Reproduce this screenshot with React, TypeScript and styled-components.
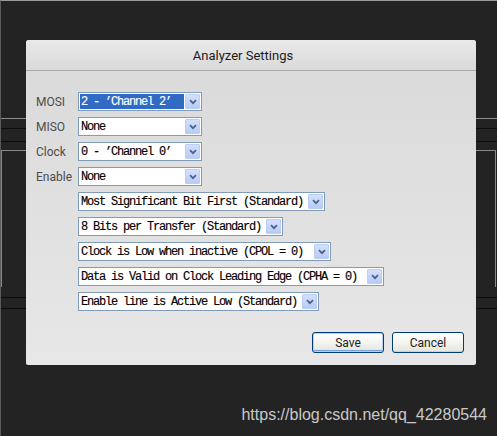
import React from "react";
import styled, { createGlobalStyle } from "styled-components";

const Global = createGlobalStyle`
  html, body { margin: 0; padding: 0; background: #232323; }
  #root { width: 497px; height: 436px; }
`;

const Screen = styled.div`
  position: relative;
  width: 497px;
  height: 436px;
  overflow: hidden;
  box-sizing: border-box;
  background: #232323;
  border-top: 1px solid #9a9a9a;
  border-left: 1px solid #5a5a5a;
  display: flex;
  flex-direction: column;
`;

const Line = styled.div<{ $mt: number; $color: string }>`
  margin-top: ${(p) => p.$mt}px;
  height: 1px;
  flex: none;
  background: ${(p) => p.$color};
`;

const Frame = styled.div`
  margin-top: 8px;
  margin-right: 1px;
  height: 137px;
  flex: none;
  box-sizing: border-box;
  border: 1px solid #8a8a8a;
  border-bottom: none;
`;

const Dialog = styled.div`
  position: absolute;
  left: 25px;
  top: 39px;
  width: 450px;
  height: 325px;
  border-radius: 3px 3px 2px 2px;
  overflow: hidden;
  display: flex;
  flex-direction: column;
  background: linear-gradient(#d9d9d9, #e7e7e7);
`;

const TitleBar = styled.div`
  height: 30px;
  flex: none;
  border-bottom: 1px solid #a9a9a9;
  background: linear-gradient(#e9e9e9, #dadada);
  display: flex;
  align-items: center;
  justify-content: center;
  padding-right: 16px;
  font: 13px Roboto, "Liberation Sans", sans-serif;
  color: #1c1c1c;
`;

const Body = styled.div`
  flex: 1;
  display: flex;
  flex-direction: column;
  padding: 21px 12px 12px 10px;
`;

const Rows = styled.div`
  display: flex;
  flex-direction: column;
  gap: 6px;
`;

const Row = styled.div`
  display: flex;
  align-items: center;
  height: 19px;
`;

const Label = styled.div`
  width: 42px;
  flex: none;
  font: 12px Roboto, "Liberation Sans", sans-serif;
  color: #4c4c4c;
`;

const SelectBox = styled.div<{ $w: number }>`
  width: ${(p) => p.$w}px;
  height: 19px;
  box-sizing: border-box;
  border: 1px solid #7f9db9;
  background: #fff;
  display: flex;
  align-items: stretch;
  padding: 1px;
  gap: 1px;
`;

const Value = styled.div<{ $sel?: boolean }>`
  flex: 1;
  display: flex;
  align-items: center;
  padding-left: 1px;
  background: ${(p) => (p.$sel ? "#316ac5" : "transparent")};
  color: ${(p) => (p.$sel ? "#fff" : "#000")};
  font: 12px "Liberation Mono", monospace;
  letter-spacing: -1.2px;
  -webkit-text-stroke: 0.15px ${(p) => (p.$sel ? "#fff" : "#000")};
  white-space: pre;
  overflow: hidden;
`;

const Arrow = styled.div`
  width: 15px;
  flex: none;
  box-sizing: border-box;
  border: 1px solid #bccdf5;
  border-radius: 1px;
  background: linear-gradient(#d4e0fd, #b7cbf7);
  display: flex;
  align-items: center;
  justify-content: center;
`;

const Footer = styled.div`
  margin-top: auto;
  display: flex;
  justify-content: flex-end;
  gap: 8px;
`;

const Btn = styled.button<{ $default?: boolean }>`
  width: 72px;
  height: 21px;
  padding: 0;
  border: 1px solid #003c74;
  border-radius: 3px;
  background: linear-gradient(#ffffff, #f3f3ee 55%, #e4e3dc);
  box-shadow: ${(p) =>
    p.$default
      ? "inset 0 0 0 1px #b9d1f7, inset 0 -1px 0 1px #7aa0e6"
      : "inset 0 -1px 0 #d6d0c5"};
  font: 12px Roboto, "Liberation Sans", sans-serif;
  color: #222;
`;

const Watermark = styled.div`
  position: absolute;
  right: 10px;
  bottom: 12px;
  font: 16px/18px "Liberation Sans", Arial, sans-serif;
  color: #c9c9c9;
`;

const Chevron = () => (
  <svg width="8" height="6" viewBox="0 0 8 6">
    <path d="M1 1.2 L4 4.2 L7 1.2" fill="none" stroke="#4d6185" strokeWidth="1.7" />
  </svg>
);

const Select = ({ w, value, sel }: { w: number; value: string; sel?: boolean }) => (
  <SelectBox $w={w}>
    <Value $sel={sel}>{value}</Value>
    <Arrow>
      <Chevron />
    </Arrow>
  </SelectBox>
);

const channels: { label: string; value: string; sel?: boolean }[] = [
  { label: "MOSI", value: "2 - \u2019Channel 2\u2019", sel: true },
  { label: "MISO", value: "None" },
  { label: "Clock", value: "0 - \u2019Channel 0\u2019" },
  { label: "Enable", value: "None" },
];

const options: { value: string; w: number }[] = [
  { value: "Most Significant Bit First (Standard)", w: 247 },
  { value: "8 Bits per Transfer (Standard)", w: 205 },
  { value: "Clock is Low when inactive (CPOL = 0)", w: 253 },
  { value: "Data is Valid on Clock Leading Edge (CPHA = 0)", w: 306 },
  { value: "Enable line is Active Low (Standard)", w: 241 },
];

export default function App() {
  return (
    <>
      <Global />
      <Screen>
        <Line $mt={117} $color="#8c8c8c" />
        <Line $mt={9} $color="#0c0c0c" />
        <Line $mt={12} $color="#0c0c0c" />
        <Frame />
        <Line $mt={10} $color="#0c0c0c" />
        <Line $mt={10} $color="#0c0c0c" />
        <Dialog>
          <TitleBar>Analyzer Settings</TitleBar>
          <Body>
            <Rows>
              {channels.map((c) => (
                <Row key={c.label}>
                  <Label>{c.label}</Label>
                  <Select w={124} value={c.value} sel={c.sel} />
                </Row>
              ))}
              {options.map((o) => (
                <Row key={o.value}>
                  <Label />
                  <Select w={o.w} value={o.value} />
                </Row>
              ))}
            </Rows>
            <Footer>
              <Btn $default>Save</Btn>
              <Btn>Cancel</Btn>
            </Footer>
          </Body>
        </Dialog>
        <Watermark>https://blog.csdn.net/qq_42280544</Watermark>
      </Screen>
    </>
  );
}
